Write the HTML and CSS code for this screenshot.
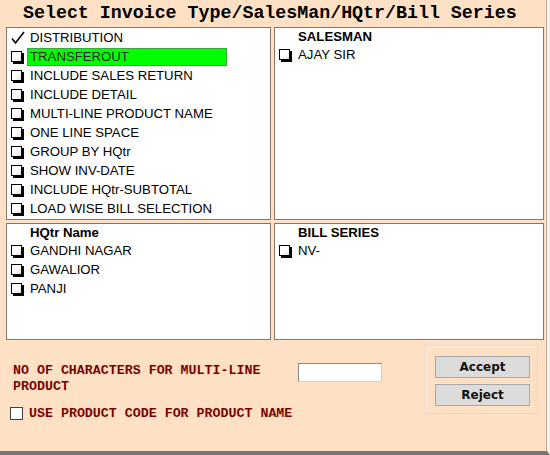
FILE: index.html
```
<!DOCTYPE html>
<html>
<head>
<meta charset="utf-8">
<link rel="stylesheet" href="styles.css">
</head>
<body>
<div class="window">
  <div class="title">Select Invoice Type/SalesMan/HQtr/Bill Series</div>
  <div class="panels">
    <div class="panel">
      <div class="row"><span class="check"><svg width="14" height="14" viewBox="0 0 14 14"><path d="M1 7.5 L4.5 12 L13 1" fill="none" stroke="#000" stroke-width="1.6"/></svg></span><span class="txt">DISTRIBUTION</span></div>
      <div class="row"><span class="box"></span><span class="txt sel">TRANSFEROUT</span></div>
      <div class="row"><span class="box"></span><span class="txt">INCLUDE SALES RETURN</span></div>
      <div class="row"><span class="box"></span><span class="txt">INCLUDE DETAIL</span></div>
      <div class="row"><span class="box"></span><span class="txt">MULTI-LINE PRODUCT NAME</span></div>
      <div class="row"><span class="box"></span><span class="txt">ONE LINE SPACE</span></div>
      <div class="row"><span class="box"></span><span class="txt">GROUP BY HQtr</span></div>
      <div class="row"><span class="box"></span><span class="txt">SHOW INV-DATE</span></div>
      <div class="row"><span class="box"></span><span class="txt">INCLUDE HQtr-SUBTOTAL</span></div>
      <div class="row"><span class="box"></span><span class="txt">LOAD WISE BILL SELECTION</span></div>
    </div>
    <div class="panel">
      <div class="head">SALESMAN</div>
      <div class="row"><span class="box"></span><span class="txt">AJAY SIR</span></div>
    </div>
    <div class="panel">
      <div class="head">HQtr Name</div>
      <div class="row"><span class="box"></span><span class="txt">GANDHI NAGAR</span></div>
      <div class="row"><span class="box"></span><span class="txt">GAWALIOR</span></div>
      <div class="row"><span class="box"></span><span class="txt">PANJI</span></div>
    </div>
    <div class="panel">
      <div class="head">BILL SERIES</div>
      <div class="row"><span class="box"></span><span class="txt">NV-</span></div>
    </div>
  </div>
  <div class="bottom">
    <div class="opts">
      <div class="line1">
        <div class="lbl">NO OF CHARACTERS FOR MULTI-LINE PRODUCT</div>
        <div class="input"></div>
      </div>
      <div class="line2">
        <span class="cb"></span>
        <span class="lbl2">USE PRODUCT CODE FOR PRODUCT NAME</span>
      </div>
    </div>
    <div class="frame">
      <div class="btn">Accept</div>
      <div class="btn">Reject</div>
    </div>
  </div>
</div>
</body>
</html>
```
FILE: styles.css
```
html, body {
  margin: 0;
  padding: 0;
  background: #fde0c3;
}
.window {
  width: 550px;
  height: 455px;
  box-sizing: border-box;
  background: #fee0c4;
  border-right: 3px solid #f4f0ec;
  border-bottom: 4px solid #747474;
  box-shadow: inset -1px 0 0 #b8aea4;
}
.title {
  height: 27px;
  line-height: 27px;
  font-family: "Liberation Mono", "Courier New", monospace;
  font-weight: bold;
  font-size: 18.3px;
  color: #000;
  padding-left: 23px;
  white-space: nowrap;
}
.panels {
  display: grid;
  grid-template-columns: 265px 270px;
  grid-template-rows: 193px 117px;
  gap: 3px;
  padding-left: 6px;
}
.panel {
  background: #fff;
  border: 1px solid #85766a;
  font-family: "Liberation Sans", Arial, sans-serif;
  font-size: 13.2px;
  color: #000;
}
.row {
  height: 19px;
  display: flex;
  align-items: center;
}
.head {
  height: 17px;
  line-height: 18px;
  padding-left: 23px;
  font-weight: bold;
  font-family: "Liberation Sans", Arial, sans-serif;
}
.box {
  width: 11px;
  height: 11px;
  box-sizing: border-box;
  border: 1px solid #000;
  box-shadow: 2px 2px 0 #000;
  background: linear-gradient(135deg, #fff 50%, #e4e4e4);
  margin-left: 4px;
  margin-right: 8px;
  margin-top: -1px;
  flex: none;
}
.check {
  width: 14px;
  height: 14px;
  margin-left: 4px;
  margin-right: 5px;
  flex: none;
  display: flex;
}
.txt {
  white-space: nowrap;
}
.txt.sel {
  background: #00ff00;
  border: 1px solid #3aa83a;
  width: 196px;
  height: 16px;
  line-height: 16px;
  padding-left: 2px;
  margin-left: -3px;
  color: #2a2a2a;
}
.bottom {
  display: flex;
  align-items: flex-start;
}
.opts {
  width: 419px;
  padding-top: 23px;
}
.line1 {
  display: flex;
  align-items: flex-start;
}
.lbl {
  width: 280px;
  margin-left: 13px;
  font-family: "Liberation Mono", "Courier New", monospace;
  font-weight: bold;
  font-size: 13.3px;
  line-height: 16px;
  color: #7e0000;
}
.input {
  width: 84px;
  height: 19px;
  box-sizing: border-box;
  margin-left: 5px;
  background: #fff;
  border: 1px solid #8a8a8a;
  border-right-color: #d0d0d0;
  border-bottom-color: #d0d0d0;
}
.line2 {
  display: flex;
  align-items: center;
  margin-top: 10px;
  height: 16px;
}
.cb {
  width: 13px;
  height: 13px;
  box-sizing: border-box;
  border: 1px solid #404040;
  background: #fff;
  margin-left: 10px;
  margin-right: 6px;
  flex: none;
}
.lbl2 {
  font-family: "Liberation Mono", "Courier New", monospace;
  font-weight: bold;
  font-size: 13.3px;
  color: #7e0000;
  white-space: nowrap;
}
.frame {
  margin-top: 5px;
  margin-left: 6px;
  width: 113px;
  height: 69px;
  box-sizing: border-box;
  border: 1px solid #f2d6ba;
  box-shadow: inset 1px 1px 0 #fff1e4;
  padding: 10px 0 0 9px;
  display: flex;
  flex-direction: column;
  gap: 6px;
}
.btn {
  width: 95px;
  height: 22px;
  box-sizing: border-box;
  background: #dcdcdc;
  border: 1px solid #a8a8a8;
  font-family: "DejaVu Sans", Verdana, sans-serif;
  font-weight: bold;
  font-size: 12px;
  line-height: 20px;
  text-align: center;
  color: #111;
}
```
